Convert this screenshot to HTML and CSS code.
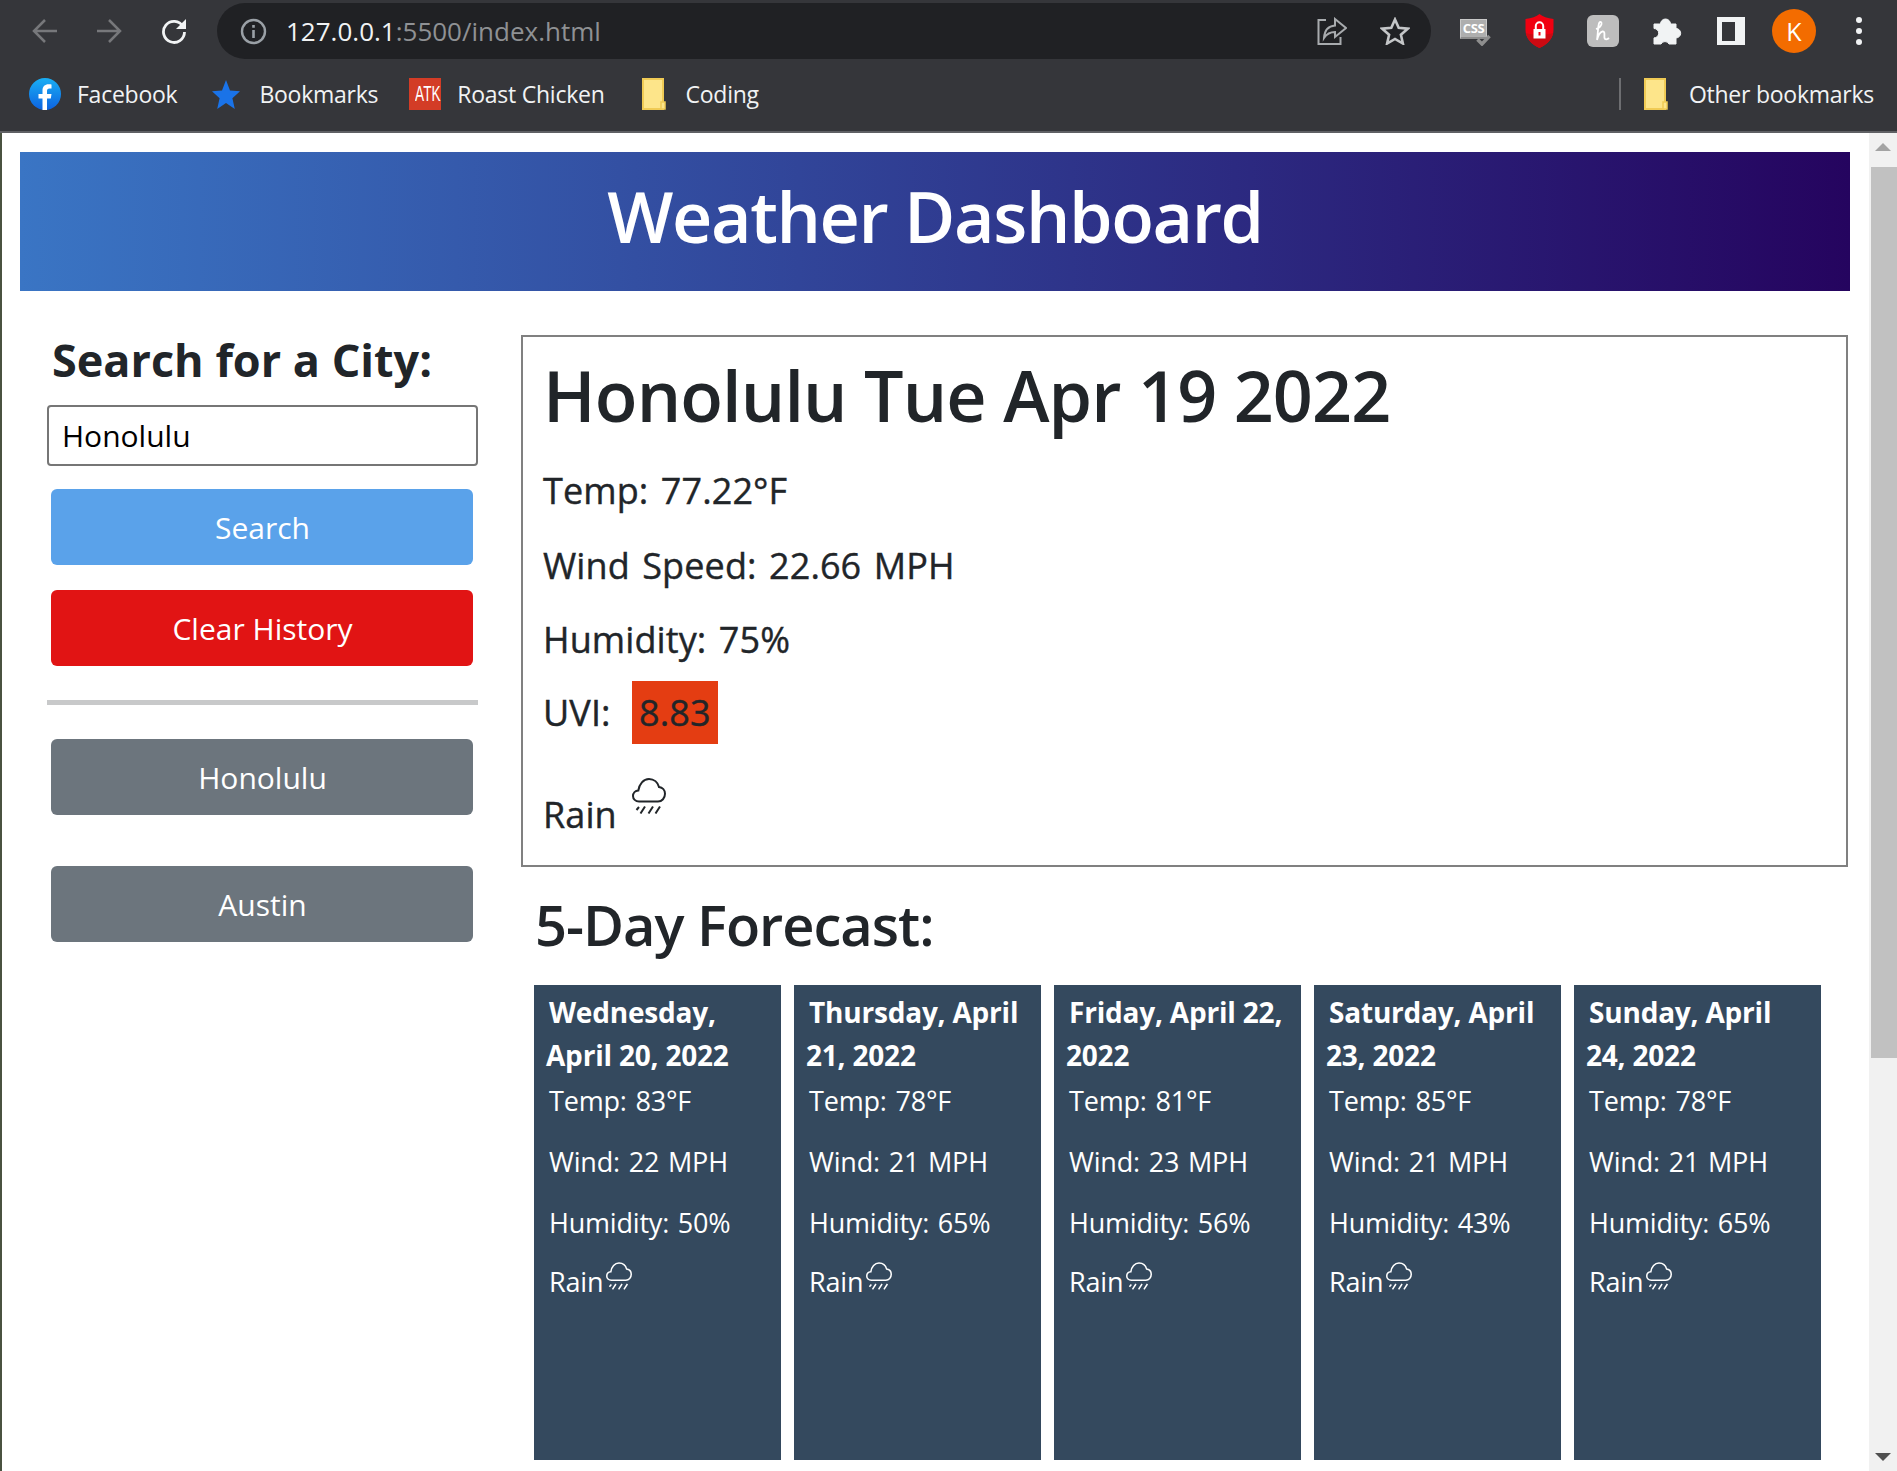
FILE: index.html
```html
<!DOCTYPE html>
<html lang="en">
<head>
    <meta charset="UTF-8">
    <meta name="viewport" content="width=device-width, initial-scale=1.0">
    <title>Weather Dashboard</title>
    <link rel="stylesheet" href="styles.css">
</head>
<body>
    <svg class="defs" width="0" height="0">
        <symbol id="rain" viewBox="0 0 34 36">
            <path d="M7 23.500C3.500 23.500 1 21 1 18c0-3 2.300-5.300 5.300-5.500C7.200 6 11.500 1 17 1c5 0 8.800 3.400 10 8 3.500.5 6 3.200 6 6.800 0 4.300-3 7.700-7 7.700z" fill="none" stroke="currentColor" stroke-width="2"/>
            <path d="M7 29l-2.500 3M13 28.500l-4.500 7M21 28.500l-4.500 7M28 28.500l-4.500 7" fill="none" stroke="currentColor" stroke-width="2"/>
        </symbol>
        <symbol id="folder" viewBox="0 0 24 32">
            <path d="M1 1h20v30H1z" fill="#fde58a" stroke="#f0cb55" stroke-width="2"/>
            <path d="M19 24h4v7h-4z" fill="#fde58a" stroke="#f0cb55" stroke-width="1.500"/>
        </symbol>
    </svg>

    <div class="toolbar">
        <svg class="nav-back" width="26" height="26" viewBox="0 0 26 26"><path d="M25 13H3M13 2L2 13l11 11" fill="none" stroke="#77787b" stroke-width="2.500"/></svg>
        <svg class="nav-forward" width="26" height="26" viewBox="0 0 26 26"><path d="M1 13h22M13 2l11 11-11 11" fill="none" stroke="#77787b" stroke-width="2.500"/></svg>
        <svg class="nav-reload" width="26" height="26" viewBox="0 0 26 26"><path d="M22 8.500A10.500 10.500 0 1 0 23.500 14" fill="none" stroke="#f1f3f4" stroke-width="2.800"/><path d="M25 1v10H15z" fill="#f1f3f4"/></svg>
        <div class="address-bar">
            <svg width="27" height="27" viewBox="0 0 27 27"><circle cx="13.500" cy="13.500" r="11.500" fill="none" stroke="#9aa0a6" stroke-width="2.400"/><path d="M12.200 12h2.600v8h-2.600zM12.200 7h2.600v2.800h-2.600z" fill="#9aa0a6"/></svg>
            <span class="url"><span class="url-host">127.0.0.1</span>:5500/index.html</span>
            <svg class="share" width="30" height="28" viewBox="0 0 30 28"><path d="M9 3H1.500v24h22v-7" fill="none" stroke="#a8abae" stroke-width="2"/><path d="M18 2l11 9-11 9v-5c-5 0-8 1.500-11 6 .5-7 4-12 11-12.500z" fill="none" stroke="#a8abae" stroke-width="2"/></svg>
            <svg width="30" height="28" viewBox="0 0 30 28"><path d="M15 2.500l3.700 8.300 9 .9-6.800 6 2 8.800L15 21.900l-7.900 4.600 2-8.800-6.800-6 9-.9z" fill="none" stroke="#c4c6c8" stroke-width="2.600"/></svg>
        </div>
        <div class="extensions">
            <div class="ext-css"><span>CSS</span>
                <svg class="ext-check" width="15" height="12" viewBox="0 0 15 12"><path d="M1.500 5.500l4.500 4.500 7.500-8" fill="none" stroke="#8e8e8e" stroke-width="3.500"/></svg>
            </div>
            <svg class="ext-shield" width="29" height="34" viewBox="0 0 29 34"><path d="M14.500 0c3 2.500 8 4.500 14 5v11c0 8-6 14.500-14 18C6.500 30.500.5 24 .5 16V5c6-.5 11-2.500 14-5z" fill="#f00011"/><path d="M.8 19c6 2 21.400 2 27.400 0-1.500 7-7 12-13.700 15C7.800 31 2.300 26 .8 19z" fill="#cc0a12"/><path d="M8.500 15h12v9.500h-12z" fill="#fff"/><path d="M10.800 15v-3a3.700 3.700 0 0 1 7.400 0v3" fill="none" stroke="#fff" stroke-width="2"/><path d="M13.500 18h2v3.500h-2z" fill="#f00011"/></svg>
            <svg class="ext-honey" width="32" height="32" viewBox="0 0 32 32"><rect width="32" height="32" rx="6" fill="#bdbdbd"/><path d="M9 14c3-1 5-3 5.500-5 .4-1.800-1.200-2.800-2.200-1.200C10.800 10.500 11 19 10 25c1-4 3-8 5.500-8.500 3-.5 1.500 4 2 6.500.4 2 3 1.500 4.500 0" fill="none" stroke="#fff" stroke-width="1.800"/></svg>
            <svg class="ext-puzzle" width="29" height="27" viewBox="0 0 29 27"><path d="M1 6h6.500a5 5 0 0 1 10 0H23v4.500a4.700 4.700 0 0 1 0 9.400V26h-7a4.500 4.500 0 0 0-8 0H1v-6.100a4.700 4.700 0 0 0 0-9.400z" fill="#f1f3f4" stroke="#f1f3f4" stroke-linejoin="round"/></svg>
            <div class="ext-sidebar"></div>
            <div class="avatar">K</div>
            <div class="kebab"><i></i><i></i><i></i></div>
        </div>
    </div>

    <div class="bookmarks">
        <a class="bookmark bookmark-fb">
            <svg width="32" height="32" viewBox="0 0 32 32"><defs><linearGradient id="fb" x1="0" y1="0" x2="0" y2="1"><stop offset="0" stop-color="#19aff4"/><stop offset="1" stop-color="#0d62e0"/></linearGradient></defs><circle cx="16" cy="16" r="16" fill="url(#fb)"/><path d="M13.500 32V20.500H9.500V16h4v-3.500c0-4 2.400-6.200 6-6.200 1.700 0 3 .2 3 .2v4h-2c-2 0-2.500 1.200-2.500 2.500v3h4.500l-.7 4.500H18V32z" fill="#fff"/></svg>
            Facebook
        </a>
        <a class="bookmark bookmark-star">
            <svg width="28" height="30" viewBox="0 0 28 30"><path d="M14 1l4 10.500 10 .8-7.600 7L22.800 30 14 24l-8.800 6 2.400-10.700L0 12.300l10-.8z" fill="#1a73e8"/></svg>
            Bookmarks
        </a>
        <a class="bookmark bookmark-atk"><span class="atk"><span>ATK</span></span>Roast Chicken</a>
        <a class="bookmark bookmark-coding"><svg width="24" height="32"><use href="#folder"/></svg>Coding</a>
        <div class="bookmarks-end">
            <div class="bookmarks-sep"></div>
            <a class="bookmark bookmark-other"><svg width="24" height="32"><use href="#folder"/></svg>Other bookmarks</a>
        </div>
    </div>

    <div class="viewport">
        <div class="page">
            <header class="banner">
                <h1>Weather Dashboard</h1>
            </header>

            <div class="content">
                <aside class="search">
                    <h2>Search for a City:</h2>
                    <input class="city-input" type="text" value="Honolulu">
                    <button class="btn btn-search" type="button">Search</button>
                    <button class="btn btn-clear" type="button">Clear History</button>
                    <hr class="divider">
                    <button class="btn btn-city" type="button">Honolulu</button>
                    <button class="btn btn-city" type="button">Austin</button>
                </aside>

                <main class="results">
                    <section class="today">
                        <h2>Honolulu Tue Apr 19 2022</h2>
                        <p>Temp: 77.22°F</p>
                        <p>Wind Speed: 22.66 MPH</p>
                        <p>Humidity: 75%</p>
                        <p class="uvi-row">UVI: <span class="uvi">8.83</span></p>
                        <p class="sky">Rain <svg class="sky-icon" width="34" height="36"><use href="#rain"/></svg></p>
                    </section>

                    <h3 class="forecast-title">5-Day Forecast:</h3>

                    <div class="forecast">
                        <div class="card">
                            <h4>Wednesday, April 20, 2022</h4>
                            <p>Temp: 83°F</p>
                            <p>Wind: 22 MPH</p>
                            <p>Humidity: 50%</p>
                            <p class="card-sky">Rain<svg class="card-icon" width="26" height="28"><use href="#rain"/></svg></p>
                        </div>
                        <div class="card">
                            <h4>Thursday, April 21, 2022</h4>
                            <p>Temp: 78°F</p>
                            <p>Wind: 21 MPH</p>
                            <p>Humidity: 65%</p>
                            <p class="card-sky">Rain<svg class="card-icon" width="26" height="28"><use href="#rain"/></svg></p>
                        </div>
                        <div class="card">
                            <h4>Friday, April 22, 2022</h4>
                            <p>Temp: 81°F</p>
                            <p>Wind: 23 MPH</p>
                            <p>Humidity: 56%</p>
                            <p class="card-sky">Rain<svg class="card-icon" width="26" height="28"><use href="#rain"/></svg></p>
                        </div>
                        <div class="card">
                            <h4>Saturday, April 23, 2022</h4>
                            <p>Temp: 85°F</p>
                            <p>Wind: 21 MPH</p>
                            <p>Humidity: 43%</p>
                            <p class="card-sky">Rain<svg class="card-icon" width="26" height="28"><use href="#rain"/></svg></p>
                        </div>
                        <div class="card">
                            <h4>Sunday, April 24, 2022</h4>
                            <p>Temp: 78°F</p>
                            <p>Wind: 21 MPH</p>
                            <p>Humidity: 65%</p>
                            <p class="card-sky">Rain<svg class="card-icon" width="26" height="28"><use href="#rain"/></svg></p>
                        </div>
                    </div>
                </main>
            </div>
        </div>

        <div class="scrollbar">
            <div class="scroll-up"></div>
            <div class="scroll-thumb"></div>
            <div class="scroll-down"></div>
        </div>
    </div>
</body>
</html>
```

FILE: styles.css
```css
* {
    box-sizing: border-box;
}

html, body {
    height: 100%;
}

body {
    margin: 0;
    display: flex;
    flex-direction: column;
    overflow: hidden;
    background: #fff;
    color: #212529;
    font-family: "Open Sans", "Noto Sans", sans-serif;
}

.defs {
    display: none;
}

/* browser chrome */
.toolbar {
    height: 64px;
    flex: none;
    display: flex;
    align-items: center;
    padding: 0 0 2px 32px;
    background: #35363a;
}

.nav-forward {
    margin-left: 38px;
}

.nav-reload {
    margin-left: 39px;
}

.address-bar {
    width: 1214px;
    height: 56px;
    margin-left: 30px;
    padding: 0 21px 0 23px;
    display: flex;
    align-items: center;
    border-radius: 28px;
    background: #202124;
}

.url {
    margin-left: 19px;
    flex: 1;
    font-size: 26px;
    color: #8f9194;
}

.url-host {
    color: #f1f3f4;
}

.share {
    margin-right: 33px;
}

.extensions {
    display: flex;
    align-items: center;
    margin-left: 29px;
}

.ext-css {
    position: relative;
    width: 27px;
    height: 20px;
    margin-bottom: 4px;
    border: 1px solid #c9c9c9;
    border-bottom: 2px solid #8c8c8c;
    background: #aeaeae;
    color: #fff;
    font-size: 13px;
    font-weight: 700;
    letter-spacing: -0.4px;
    line-height: 16px;
    text-align: center;
}

.ext-check {
    position: absolute;
    right: -5px;
    bottom: -9px;
}

.ext-shield {
    margin-left: 38px;
}

.ext-honey {
    margin-left: 33px;
}

.ext-puzzle {
    margin-left: 34px;
}

.ext-sidebar {
    width: 28px;
    height: 28px;
    margin-left: 35px;
    border: solid #f1f3f4;
    border-width: 5px 10px 4px 5px;
}

.avatar {
    width: 44px;
    height: 44px;
    margin-left: 27px;
    border-radius: 50%;
    background: #f36c00;
    color: #fff;
    font-size: 25px;
    line-height: 44px;
    text-align: center;
}

.kebab {
    margin-left: 40px;
    display: flex;
    flex-direction: column;
    gap: 5px;
}

.kebab i {
    width: 6px;
    height: 6px;
    border-radius: 50%;
    background: #f1f3f4;
}

.bookmarks {
    height: 69px;
    flex: none;
    display: flex;
    align-items: center;
    padding: 0 23px 8px 29px;
    border-bottom: 2px solid #5f6064;
    background: #35363a;
    color: #f1f3f4;
    font-size: 23px;
    letter-spacing: -0.25px;
}

.bookmark {
    display: flex;
    align-items: center;
    gap: 16px;
}

.bookmark-star {
    margin-left: 35px;
    gap: 19px;
}

.bookmark-atk {
    margin-left: 31px;
}

.bookmark-coding {
    margin-left: 37px;
    gap: 20px;
}

.bookmark-other {
    gap: 21px;
}

.atk {
    width: 32px;
    height: 32px;
    background: #d33c26;
    color: #fff;
    font-family: "Liberation Sans", sans-serif;
    font-size: 22px;
    line-height: 32px;
    letter-spacing: 0;
    text-align: center;
    overflow: hidden;
}

.atk span {
    display: block;
    transform: scaleX(0.62);
}

.bookmarks-end {
    margin-left: auto;
    display: flex;
    align-items: center;
    gap: 23px;
}

.bookmarks-sep {
    width: 2px;
    height: 32px;
    background: #6d6e71;
}

/* page */
.viewport {
    flex: 1;
    min-height: 0;
    display: flex;
}

.page {
    flex: 1;
    min-width: 0;
    padding: 19px 19px 0 18px;
    border-left: 2px solid #4a5240;
    overflow: hidden;
}

.banner {
    height: 139px;
    display: flex;
    align-items: center;
    justify-content: center;
    background: linear-gradient(to right, #3a75c4, #25045f);
}

.banner h1 {
    margin: 0 0 11px;
    color: #fff;
    font-size: 70px;
    font-weight: 600;
    letter-spacing: -1.4px;
}

.content {
    display: flex;
    margin-top: 44px;
}

.search {
    width: 501px;
    flex: none;
    padding: 2px 43px 0 27px;
    display: flex;
    flex-direction: column;
    align-items: center;
}

.search h2 {
    align-self: flex-start;
    margin: 0 0 22px 5px;
    font-size: 45px;
    font-weight: 700;
    line-height: 46px;
}

.city-input {
    width: 100%;
    height: 61px;
    margin-bottom: 23px;
    padding: 0 13px;
    border: 2px solid #767676;
    border-radius: 4px;
    color: #000;
    font-family: inherit;
    font-size: 30px;
}

.btn {
    width: 422px;
    height: 76px;
    flex: none;
    margin-right: 2px;
    padding: 0 0 0 2px;
    border: 0;
    border-radius: 6px;
    color: #fff;
    font-family: inherit;
    font-size: 30px;
}

.btn-search {
    background: #5aa2ea;
}

.btn-clear {
    margin-top: 25px;
    background: #e11414;
}

.btn-city {
    margin-bottom: 51px;
    background: #6c757d;
}

.divider {
    width: 100%;
    height: 5px;
    margin: 34px 0;
    border: 0;
    background: #c8c9ca;
}

.results {
    flex: 1;
    min-width: 0;
}

.today {
    height: 532px;
    margin-right: 2px;
    padding: 15px 20px 0;
    border: 2px solid #808080;
}

.today h2 {
    margin: 0 0 31px;
    font-size: 70px;
    font-weight: 600;
    letter-spacing: -0.85px;
    line-height: 86px;
}

.today p {
    margin: 0 0 30.5px;
    font-size: 36px;
    line-height: 44px;
    word-spacing: 3px;
    letter-spacing: 0.1px;
    -webkit-text-stroke: 0.4px #212529;
}

.uvi {
    display: inline-block;
    height: 63px;
    margin-left: 9px;
    padding: 0 7px;
    background: #e43d12;
    line-height: 63px;
}

.today .uvi-row {
    margin-bottom: 0;
    margin-top: -12px;
}

.today .sky {
    margin-top: 34px;
}

.sky-icon {
    margin-left: 3px;
    vertical-align: 14px;
}

.forecast-title {
    margin: 22px 0 0 14px;
    font-size: 56px;
    font-weight: 600;
    letter-spacing: -1px;
    line-height: 70px;
}

.forecast {
    display: flex;
    gap: 13px;
    width: 1287px;
    margin: 26px 0 0 13px;
}

.card {
    flex: 1;
    height: 475px;
    padding: 0 12px 0 15px;
    background: #34495e;
    color: #fff;
}

.card h4 {
    margin: 6px 0 6px -3px;
    text-indent: 3px;
    font-size: 28px;
    font-weight: 700;
    letter-spacing: -0.2px;
    line-height: 43px;
}

.card p {
    margin: 0 0 25px;
    font-size: 27px;
    line-height: 36px;
    letter-spacing: -0.2px;
    word-spacing: 2px;
}

.card .card-sky {
    margin-top: -4px;
}

.card-icon {
    margin-left: 3px;
    vertical-align: 2px;
}

/* page scrollbar */
.scrollbar {
    width: 28px;
    flex: none;
    display: flex;
    flex-direction: column;
    background: #f1f1f1;
}

.scroll-up {
    margin: 10px auto 16px;
    border: 8px solid transparent;
    border-top: 0;
    border-bottom: 8px solid #a3a3a3;
}

.scroll-thumb {
    height: 891px;
    margin: 0 0 0 2px;
    background: #c1c1c1;
}

.scroll-down {
    margin: auto auto 10px;
    border: 8px solid transparent;
    border-bottom: 0;
    border-top: 8px solid #505050;
}
```
